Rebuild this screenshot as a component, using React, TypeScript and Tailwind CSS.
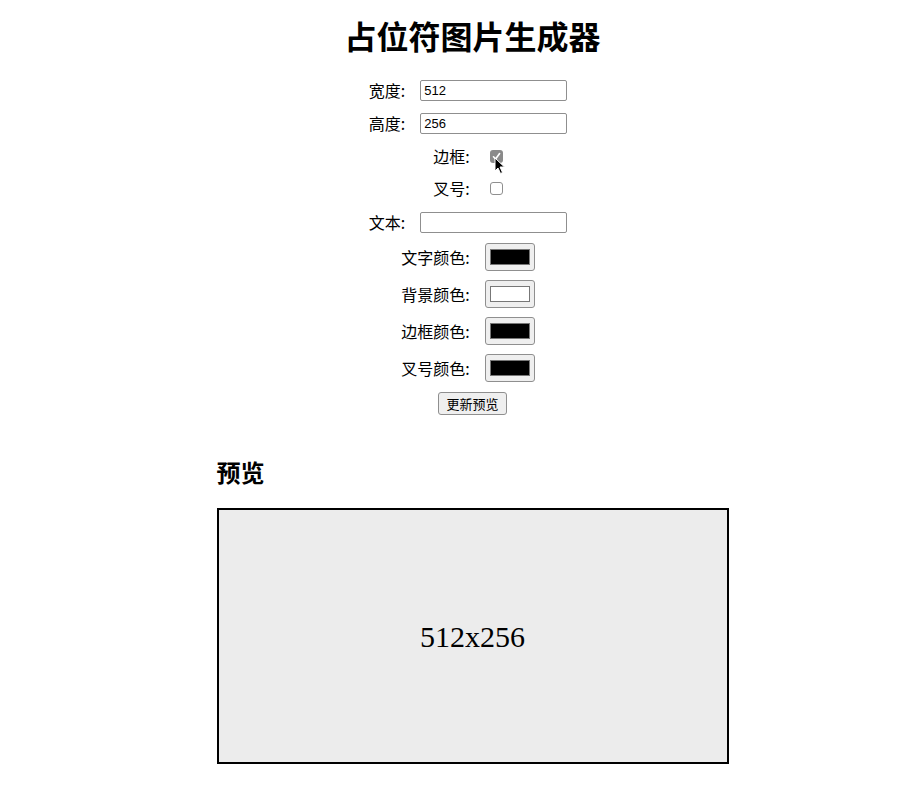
import { useState } from 'react'

const cjk = { fontFamily: '"Noto Sans CJK SC", "Noto Sans", sans-serif' }

function TextRow({ label, value }: { label: string; value: string }) {
  return (
    <div className="flex items-center justify-center h-[22px] pr-[9px]">
      <span className="text-[16px] leading-[22px] text-black mr-[15px]">{label}</span>
      <input
        type="text"
        defaultValue={value}
        className="w-[147px] h-[21px] border border-[#8f8f8f] rounded-[2px] px-[3px] text-[13px] text-black bg-white outline-none"
        style={{ fontFamily: '"Liberation Sans", Arial, sans-serif' }}
      />
    </div>
  )
}

function CheckRow({ label, checked, cursor }: { label: string; checked: boolean; cursor?: boolean }) {
  return (
    <div className="flex items-center justify-center h-[22px] pr-[9px]">
      <span className="text-[16px] leading-[22px] text-black mr-[20px]">{label}</span>
      <div className="relative w-[13px] h-[13px]">
        {checked ? (
          <div className="w-[13px] h-[13px] rounded-[3px] bg-[#8a8a8a] flex items-center justify-center">
            <svg width="9" height="9" viewBox="0 0 9 9">
              <path d="M1.5 4.8 L3.6 7 L7.6 1.6" stroke="#fff" strokeWidth="1.6" fill="none" strokeLinecap="round" strokeLinejoin="round" />
            </svg>
          </div>
        ) : (
          <div className="w-[13px] h-[13px] rounded-[3px] border border-[#8f8f8f] bg-white" />
        )}
        {cursor && (
          <svg className="absolute left-[4px] top-[7px]" width="12" height="18" viewBox="0 0 12 18">
            <path d="M1 1 L1 14 L4 11 L6.5 16.5 L8.5 15.5 L6 10 L10.5 10 Z" fill="#000" stroke="#fff" strokeWidth="1" strokeLinejoin="round" />
          </svg>
        )}
      </div>
    </div>
  )
}

function ColorRow({ label, color }: { label: string; color: string }) {
  return (
    <div className="flex items-center justify-center h-[28px] pr-[9px]">
      <span className="text-[16px] leading-[22px] text-black mr-[15px]">{label}</span>
      <div className="w-[50px] h-[28px] rounded-[3px] border border-[#8f8f8f] bg-[#efefef] flex items-center justify-center">
        <div className="w-[40px] h-[16px] border border-[#777]" style={{ backgroundColor: color }} />
      </div>
    </div>
  )
}

export default function App() {
  const [w] = useState(512)
  const [h] = useState(256)

  return (
    <div className="min-h-screen bg-white pl-[24px] text-black" style={cjk}>
      <div className="flex flex-col items-center">
        <h1 className="mt-[15px] text-[32px] leading-[40px] font-bold">占位符图片生成器</h1>

        <div className="flex flex-col mt-[24px]">
          <TextRow label="宽度:" value={String(w)} />
          <div className="mt-[11px]">
            <TextRow label="高度:" value={String(h)} />
          </div>
          <div className="mt-[11px]">
            <CheckRow label="边框:" checked cursor />
          </div>
          <div className="mt-[10px]">
            <CheckRow label="叉号:" checked={false} />
          </div>
          <div className="mt-[12px]">
            <TextRow label="文本:" value="" />
          </div>
          <div className="mt-[10px]">
            <ColorRow label="文字颜色:" color="#000000" />
          </div>
          <div className="mt-[9px]">
            <ColorRow label="背景颜色:" color="#ffffff" />
          </div>
          <div className="mt-[9px]">
            <ColorRow label="边框颜色:" color="#000000" />
          </div>
          <div className="mt-[9px]">
            <ColorRow label="叉号颜色:" color="#000000" />
          </div>
          <div className="mt-[10px] flex justify-center">
            <button className="h-[23px] px-[7px] rounded-[3px] border border-[#8f8f8f] bg-[#efefef] text-[13px] leading-[21px] text-black">
              更新预览
            </button>
          </div>
        </div>

        <div className="w-[512px] mt-[41px]">
          <h2 className="text-[24px] leading-[32px] font-bold">预览</h2>
          <div className="mt-[20px] w-[512px] h-[256px] border-2 border-black bg-[#ececec] flex items-center justify-center">
            <span
              className="text-[30px] text-black"
              style={{ fontFamily: '"Liberation Serif", "Times New Roman", serif' }}
            >
              {w}x{h}
            </span>
          </div>
        </div>
      </div>
    </div>
  )
}
